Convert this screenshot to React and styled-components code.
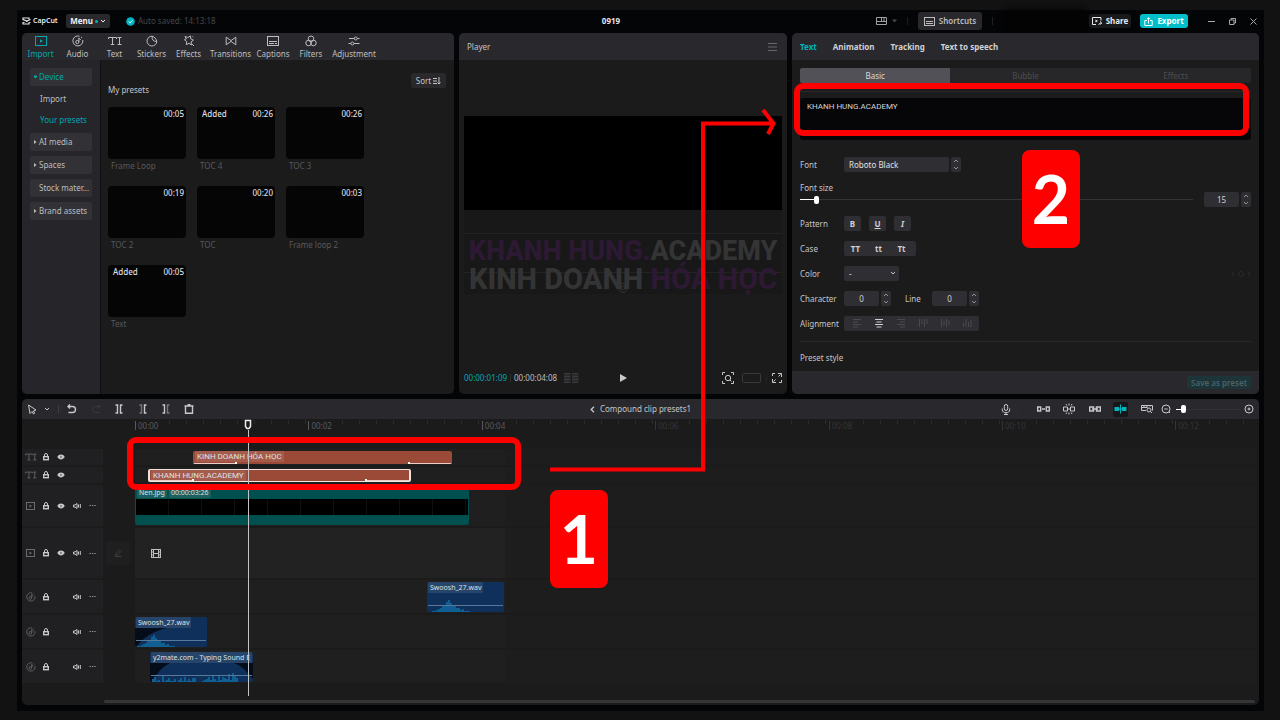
import { useState } from "react";
import styled, { createGlobalStyle, css } from "styled-components";

const GlobalStyle = createGlobalStyle`
  * {
    box-sizing: border-box;
  }
  body {
    margin: 0;
    background: #121212;
    color: #c4c4c6;
    font-family: "Noto Sans", "Open Sans", sans-serif;
    font-size: 8px;
    line-height: 12px;
  }
  button, input, select, textarea {
    margin: 0;
    padding: 0;
    border: 0;
    outline: 0;
    background: none;
    color: inherit;
    font: inherit;
  }
  button {
    cursor: pointer;
  }
  svg {
    display: block;
    flex: none;
  }
`;

const Page = styled.div`
  position: relative;
  min-height: 100vh;
  padding: 10px 16px 9px 17px;
  display: flex;
`;
const AppWindow = styled.div`
  flex: 1;
  min-width: 0;
  display: flex;
  flex-direction: column;
  padding: 0 5px 6px;
  background: #040507;
`;

/* title bar */
const TitleBar = styled.header`
  display: flex;
  height: 23px;
  align-items: center;
`;
const TitleMain = styled.div`
  flex: 1;
  display: grid;
  grid-template-columns: minmax(0, 1fr) auto minmax(0, 1fr);
  align-items: center;
  padding-bottom: 1px;
`;
const TitleSide = styled.div`
  display: flex;
  align-items: center;
  justify-content: ${(p) => (p.$end ? "flex-end" : "flex-start")};
  padding-right: ${(p) => (p.$end ? "12px" : "0")};
`;
const ProjectName = styled.h1`
  margin: 0;
  font-size: 8px;
  font-weight: 700;
  color: #e4e4e6;
`;
const Brand = styled.div`
  display: flex;
  align-items: center;
  gap: 2px;
  width: 44px;
  font-size: 7px;
  font-weight: 600;
  color: #e8e8ea;
`;
const MenuButton = styled.button`
  display: flex;
  align-items: center;
  justify-content: center;
  gap: 2px;
  width: 44px;
  height: 14px;
  border-radius: 2px;
  background: #29292c;
  font-weight: 700;
  color: #f0f0f2;
`;
const Dot = styled.i`
  width: 3px;
  height: 3px;
  border-radius: 50%;
  background: #00b5be;
`;
const SaveState = styled.div`
  display: flex;
  align-items: center;
  gap: 3px;
  margin-left: 16px;
  color: #47474a;
`;
const TitleButton = styled.button`
  display: flex;
  align-items: center;
  justify-content: center;
  gap: 4px;
  width: ${(p) => p.$width}px;
  height: ${(p) => (p.$tall ? 18 : 14)}px;
  border-radius: 3px;
  background: ${(p) => (p.$accent ? "#00bfcb" : p.$tall ? "#29292d" : "#19191c")};
  color: ${(p) => (p.$accent ? "#ffffff" : p.$tall ? "#bcbcbf" : "#e8e8ea")};
  font-weight: ${(p) => (p.$tall ? 600 : 700)};
`;
const LayoutButton = styled.button`
  display: flex;
  align-items: center;
  gap: 5px;
  color: #a0a0a3;
`;
const Separator = styled.i`
  width: 1px;
  height: ${(p) => p.$height || 8}px;
  margin: 0 ${(p) => p.$gap || 10}px;
  background: ${(p) => p.$color || "#1d1d20"};
`;
const Account = styled.div`
  width: 84px;
  height: 20px;
  margin: 0 2px 0 0;
  border-radius: 4px;
  background: #030304;
  box-shadow: 0 -2px 6px #060607;
`;
const WindowControls = styled.div`
  width: 59px;
  display: flex;
  justify-content: space-between;
  align-items: center;
  padding: 0 2px 0 8px;
  color: #a8a8aa;
  & button {
    display: flex;
  }
`;

/* panels */
const Panels = styled.main`
  flex: 361 1 361px;
  display: grid;
  grid-template-columns: minmax(0, 432fr) minmax(0, 328fr) minmax(0, 467fr);
  gap: 5px;
`;
const Panel = styled.section`
  display: flex;
  flex-direction: column;
  min-width: 0;
  overflow: hidden;
  border-radius: 5px;
  background: #1b1b1c;
`;
const PanelHeader = styled.div`
  display: flex;
  align-items: center;
  height: 27px;
  padding: 0 8px;
  background: #29292d;
`;

/* media panel */
const MediaTabs = styled.nav`
  display: grid;
  grid-template-columns: repeat(5, 37px) 47px repeat(2, 38px) 48px;
  height: 27px;
  background: #29292d;
`;
const MediaTab = styled.button`
  display: flex;
  flex-direction: column;
  align-items: center;
  gap: 1px;
  padding-top: 2px;
  white-space: nowrap;
  color: ${(p) => (p.$active ? "#00a7ae" : "#bdbdbf")};
`;
const MediaBody = styled.div`
  flex: 1;
  display: flex;
`;
const Sidebar = styled.nav`
  width: 79px;
  padding: 8px;
  display: flex;
  flex-direction: column;
  gap: 5px;
  background: #26262a;
  border-right: 1px solid #101011;
`;
const SideItem = styled.button`
  display: flex;
  align-items: center;
  gap: 2px;
  height: 18px;
  padding-left: ${(p) => (p.$arrow ? 4 : 9)}px;
  border-radius: 2px;
  background: #323236;
  white-space: nowrap;
  color: ${(p) => (p.$active ? "#00a7ae" : "#bdbdbf")};
`;
const SubItem = styled.button`
  height: 16px;
  padding-left: 10px;
  text-align: left;
  white-space: nowrap;
  color: ${(p) => (p.$active ? "#00a7ae" : "#bdbdbf")};
`;
const Library = styled.div`
  flex: 1;
  padding: 13px 8px 0 7px;
`;
const LibraryBar = styled.div`
  display: flex;
  justify-content: space-between;
  height: 34px;
`;
const LibraryTitle = styled.h2`
  margin: 11px 0 0;
  font-size: 8px;
  font-weight: 400;
`;
const SortButton = styled.button`
  display: flex;
  align-items: center;
  justify-content: center;
  gap: 2px;
  width: 35px;
  height: 15px;
  border-radius: 2px;
  background: #29292b;
`;
const PresetGrid = styled.div`
  display: grid;
  grid-template-columns: repeat(auto-fill, 78px);
  gap: 14px 11px;
`;
const Preset = styled.figure`
  margin: 0;
`;
const Thumb = styled.div`
  display: flex;
  justify-content: space-between;
  height: 52px;
  padding: 1px 2px 0 5px;
  border-radius: 4px;
  background: #050506;
  font-weight: 500;
  color: #dedee0;
`;
const PresetName = styled.figcaption`
  padding: 1px 3px 0;
  color: #58585a;
`;

/* player panel */
const HeaderTitle = styled.h2`
  flex: 1;
  margin: 0;
  font-size: 8px;
  font-weight: 400;
`;
const Stage = styled.div`
  flex: 1;
  padding: 56px 5px 0;
`;
const Video = styled.div`
  height: 94px;
  background: #000000;
`;
const Caption = styled.div`
  position: relative;
  height: 84px;
  padding-top: 27px;
  background: linear-gradient(#232324, #232324) 0 23px / 100% 1px no-repeat,
    linear-gradient(#232324, #232324) 0 62px / 100% 1px no-repeat, #181819;
  font-family: Roboto, sans-serif;
  font-weight: 800;
  line-height: 28px;
  text-align: center;
  white-space: nowrap;
  color: #343435;
`;
const CaptionLine = styled.p`
  margin: 0;
  font-size: ${(p) => p.$size}px;
`;
const Tint = styled.span`
  display: inline-block;
  color: #2d1933;
`;
const Pivot = styled.span`
  position: absolute;
  left: 50%;
  top: 72px;
  margin-left: -6px;
`;
const PlayerBar = styled.div`
  display: grid;
  grid-template-columns: 1fr auto 1fr;
  align-items: center;
  height: 32px;
  padding: 0 5px;
  color: #d0d0d2;
`;
const Group = styled.div`
  display: flex;
  align-items: center;
  gap: ${(p) => p.$gap || 0}px;
  justify-content: ${(p) => p.$justify || "flex-start"};
`;
const Timecode = styled.span`
  color: ${(p) => (p.$current ? "#00a7ae" : "#bdbdbf")};
`;
const IconButton = styled.button`
  display: flex;
  align-items: center;
  justify-content: center;
  width: ${(p) => p.$width || "auto"};
  color: ${(p) => (p.$dim ? "#3a3a3d" : "#c8c8ca")};
`;

/* inspector panel */
const InspectorTab = styled.button`
  margin-right: 16px;
  font-weight: 700;
  color: ${(p) => (p.$active ? "#00b5be" : "#d2d2d4")};
`;
const InspectorBody = styled.div`
  flex: 1;
  padding: 8px 8px 0;
`;
const Segments = styled.div`
  display: grid;
  grid-template-columns: repeat(3, 1fr);
  height: 15px;
  overflow: hidden;
  border-radius: 2px;
  background: #272729;
`;
const Segment = styled.button`
  background: ${(p) => (p.$active ? "#515157" : "transparent")};
  color: ${(p) => (p.$active ? "#d8d8da" : "#4c4c4f")};
`;
const Rule = styled.hr`
  height: 1px;
  margin: ${(p) => p.$margin};
  border: 0;
  background: #28282a;
`;
const TextContent = styled.textarea`
  display: block;
  width: 100%;
  height: 42px;
  padding: 3px 7px;
  resize: none;
  border-radius: 3px;
  background: #060608;
  font-family: Roboto, sans-serif;
  color: #d4d4d6;
`;
const Field = styled.div`
  display: flex;
  align-items: center;
  height: 25px;
`;
const FontField = styled(Field)`
  height: 15px;
  margin-top: 17px;
`;
const FieldName = styled.label`
  width: 44px;
  white-space: nowrap;
`;
const LineName = styled.label`
  width: 27px;
  margin-left: 14px;
`;
const StyleFields = styled.div`
  margin-top: 4px;
`;
const controlBox = css`
  height: 15px;
  border-radius: 2px;
  background: #2f2f33;
  color: #d0d0d2;
`;
const SelectBox = styled.select`
  ${controlBox}
  appearance: none;
  width: ${(p) => p.$width}px;
  padding: 0 5px;
  color: #e0e0e2;
`;
const SelectWrap = styled.div`
  position: relative;
  display: flex;
  & > svg {
    position: absolute;
    right: 3px;
    top: 4px;
    pointer-events: none;
  }
`;
const NumberBox = styled.input`
  ${controlBox}
  width: 35px;
  text-align: center;
`;
const Stepper = styled.div`
  ${controlBox}
  display: flex;
  flex-direction: column;
  width: 10px;
  margin-left: 2px;
  color: #909093;
  & button {
    flex: 1;
    display: flex;
    align-items: center;
    justify-content: center;
  }
`;
const SizeField = styled.div`
  display: grid;
  grid-template-columns: minmax(0, 1fr) auto;
  column-gap: 11px;
  align-items: center;
`;
const SizeLabel = styled.label`
  grid-column: 1 / -1;
  margin-top: 10px;
  height: 10px;
`;
const Slider = styled.input`
  appearance: none;
  width: ${(p) => p.$width || "100%"};
  height: 9px;
  background: linear-gradient(to right, #ffffff var(--fill), #343437 var(--fill)) center / 100% 1px no-repeat;
  &::-webkit-slider-thumb {
    appearance: none;
    width: 5px;
    height: 8px;
    border-radius: 2px;
    background: #ffffff;
  }
`;
const StyleButton = styled.button`
  ${controlBox}
  width: 17px;
  margin-right: 8px;
  font-weight: 700;
  font-style: ${(p) => (p.$italic ? "italic" : "normal")};
  text-decoration: ${(p) => (p.$underline ? "underline" : "none")};
`;
const ButtonStrip = styled.div`
  ${controlBox}
  display: flex;
  padding: ${(p) => (p.$icons ? "0 1px 0 2px" : "0 3px 0 0")};
  & button {
    display: flex;
    align-items: center;
    justify-content: center;
    width: ${(p) => (p.$icons ? 22 : 23)}px;
    font-weight: 700;
  }
`;
const AlignButton = styled.button`
  color: ${(p) => (p.$active ? "#d0d0d2" : "#4a4a4e")};
`;
const KeyframeNav = styled.div`
  margin-left: auto;
  color: #2c2c2e;
`;
const InspectorFooter = styled.footer`
  display: flex;
  align-items: center;
  justify-content: flex-end;
  height: 23px;
  padding: 0 8px;
  background: #29292d;
`;
const SaveButton = styled.button`
  width: 64px;
  height: 13px;
  border-radius: 2px;
  background: #1d3438;
  font-weight: 600;
  white-space: nowrap;
  color: #48636a;
`;

/* timeline */
const Timeline = styled.section`
  position: relative;
  flex: 306 1 306px;
  display: flex;
  flex-direction: column;
  margin-top: 5px;
  overflow: hidden;
  border-radius: 5px;
  background: #1b1b1c;
`;
const Toolbar = styled.div`
  display: grid;
  grid-template-columns: minmax(0, 1fr) auto minmax(0, 1fr);
  align-items: center;
  height: 20px;
  padding: 0 5px;
  background: #29292d;
`;
const Crumb = styled.button`
  display: flex;
  align-items: center;
  gap: 5px;
`;
const SnapButton = styled.button`
  display: flex;
  align-items: center;
  justify-content: center;
  width: 15px;
  height: 15px;
  margin: 0 5px;
  border-radius: 2px;
  background: #18181a;
  color: #00b5be;
`;
const Ruler = styled.div`
  display: flex;
  height: 30px;
  padding-left: 113px;
  overflow: hidden;
`;
const Mark = styled.div`
  flex: 0 0 calc(100% / 7 * 1.08);
  display: flex;
  align-items: flex-start;
  padding-top: 1px;
  color: ${(p) => (p.$dim ? "#353537" : "#5a5a5c")};
`;
const MarkLabel = styled.span`
  width: 34px;
  height: 9px;
  margin-top: 1px;
  padding-left: 2px;
  border-left: 1px solid;
  line-height: 10px;
`;
const Ticks = styled.i`
  flex: 1;
  height: 4px;
  background: repeating-linear-gradient(to right, #2c2c2e 0 1px, transparent 1px 17px);
`;
const Tracks = styled.div`
  flex: 1;
  display: flex;
  flex-direction: column;
  gap: 2px;
`;
const Track = styled.div`
  display: grid;
  grid-template-columns: 81px 32px minmax(0, 1fr);
  height: ${(p) => p.$height}px;
  padding-right: 3px;
`;
const TrackHead = styled.div`
  display: grid;
  grid-template-columns: repeat(5, 1fr);
  align-items: center;
  padding: 0 2px 0 1px;
  border-right: 1px solid #222224;
  background: #202023;
`;
const TrackKind = styled.span`
  display: flex;
  justify-content: center;
  color: #6a6a6d;
`;
const Gutter = styled.div`
  display: flex;
  align-items: center;
  padding-left: 3px;
`;
const CoverButton = styled.button`
  display: flex;
  align-items: center;
  justify-content: center;
  width: 24px;
  height: 24px;
  border-radius: 3px;
  background: #1f1f20;
  color: #3c3c3e;
`;
const Lane = styled.div`
  display: flex;
  align-items: center;
  background: linear-gradient(to right, ${(p) => (p.$main ? "#222223" : "#1f1f20")} 370px, #1d1d1e 370px);
`;
const clipColors = { text: "#9b4a38", video: "#00504f", audio: "#0f305a" };
const Clip = styled.div`
  position: relative;
  display: flex;
  flex-direction: column;
  flex: none;
  height: ${(p) => p.$height}px;
  overflow: hidden;
  border: 0 solid #f2e4e0;
  border-width: ${(p) => (p.$selected ? "1px 2px" : "0")};
  border-radius: 2px;
  background: ${(p) => clipColors[p.$kind]};
  color: #dde2e6;
`;
const ClipLabels = styled.div`
  display: flex;
  gap: 2px;
  flex: none;
  height: 11px;
  padding-left: ${(p) => p.$inset || 1}px;
`;
const ClipLabel = styled.span`
  padding: 0 2px;
  border-radius: 1px;
  background: rgba(255, 255, 255, 0.1);
  font-size: 7px;
  line-height: 11px;
  white-space: nowrap;
`;
const TitleLabel = styled(ClipLabel)`
  font-family: Roboto, sans-serif;
  font-size: 8px;
  line-height: 12px;
`;
const Fade = styled.i`
  position: absolute;
  bottom: 0;
  ${(p) => p.$side}: 0;
  width: 44px;
  height: 1px;
  background: #e9cfc8;
  &::after {
    content: "";
    position: absolute;
    bottom: 0;
    ${(p) => (p.$side === "left" ? "right" : "left")}: 0;
    width: 2px;
    height: 2px;
    background: #ffffff;
  }
`;
const Frames = styled.div`
  height: 16px;
  margin: 1px 1px 0;
  background: repeating-linear-gradient(to right, #000000 0 32px, #101010 32px 33px);
`;
const FilmIcon = styled.span`
  margin-left: 16px;
  color: #c0c0c2;
`;
const ScrollBar = styled.div`
  height: 3px;
  margin: 0 4px 2px 82px;
  border-radius: 2px;
  background: #363638;
`;
const Playhead = styled.div`
  position: absolute;
  left: 222px;
  top: 20px;
  bottom: 9px;
  display: flex;
  flex-direction: column;
  align-items: center;
  &::after {
    content: "";
    flex: 1;
    width: 1px;
    background: #c4c4c6;
  }
`;

/* call-outs */
const Highlight = styled.div`
  position: absolute;
  left: ${(p) => p.$x}px;
  top: ${(p) => p.$y}px;
  width: ${(p) => p.$width}px;
  height: 53px;
  border: 6px solid #ff0000;
  border-radius: 9px;
  pointer-events: none;
`;
const Arrow = styled.svg`
  position: absolute;
  left: 548px;
  top: 106px;
  pointer-events: none;
`;
const StepBadge = styled.div`
  position: absolute;
  left: ${(p) => p.$x}px;
  top: ${(p) => p.$y}px;
  display: flex;
  align-items: center;
  justify-content: center;
  width: 58px;
  height: 98px;
  border-radius: 8px;
  background: #ff0000;
  color: #ffffff;
  font-family: Lato, sans-serif;
  font-size: 66px;
  font-weight: 700;
  line-height: 98px;
`;

const Icon = ({ w = 12, h = 12, sw = 1, children }) => (
  <svg
    width={w}
    height={h}
    viewBox={`0 0 ${w} ${h}`}
    fill="none"
    stroke="currentColor"
    strokeWidth={sw}
    aria-hidden="true"
  >
    {children}
  </svg>
);

const AudioGlyph = ({ size = 12 }) => (
  <svg width={size} height={size} viewBox="0 0 12 12" fill="none" stroke="currentColor" aria-hidden="true">
    <path d="M7.5 1.2A5 5 0 1 0 10.8 5M10 2.8 9 2" />
    <circle cx="5.3" cy="7" r="1.6" />
    <path d="M6.9 7V2.8c.3 1.2 1 1.6 2 1.8" />
  </svg>
);
const TextGlyph = ({ w = 14, h = 12 }) => (
  <svg width={w} height={h} viewBox="0 0 14 12" fill="none" stroke="currentColor" aria-hidden="true">
    <path d="M.5 4V2.5h8V4M4.500 2.500v7M2.800 9.500h3.400M9.500 2.500h4M9.500 9.500h4M11.500 2.500v7" />
  </svg>
);
const ChevronDown = () => (
  <Icon w={6} h={6}>
    <path d="m1 2 2 2 2-2" />
  </Icon>
);
const ChevronUp = () => (
  <Icon w={6} h={4}>
    <path d="m1 3 2-2 2 2" />
  </Icon>
);
const SmallDown = () => (
  <Icon w={6} h={4}>
    <path d="m1 1 2 2 2-2" />
  </Icon>
);

const tabIcons = {
  Import: (
    <Icon>
      <rect x=".5" y="1.5" width="11" height="9" />
      <path d="m5 4.2 3 1.8-3 1.8z" fill="currentColor" stroke="none" />
    </Icon>
  ),
  Audio: <AudioGlyph />,
  Text: <TextGlyph />,
  Stickers: (
    <Icon>
      <path d="M6 1.2A4.9 4.9 0 1 0 10.8 6.6C10.4 3.8 8.3 1.6 6 1.2zM6.2 1.4c-.5 3 1 5 4.4 5.2" />
    </Icon>
  ),
  Effects: (
    <Icon>
      <path d="m2 1.5 2.8 1L7.5.9l.2 2.9 2.8 1.4-2.4 1.6.4 3.1-2.5-1.6-2.7 1.3.4-3L1.5 4.7l1.8-.8zM9 9l2 2M9.5 1.5l.8.5" />
    </Icon>
  ),
  Transitions: (
    <Icon>
      <path d="M1.2 2.2v7.6L6 6.4l4.8 3.4V2.2L6 5.6z" />
    </Icon>
  ),
  Captions: (
    <Icon>
      <rect x=".5" y="1.5" width="11" height="9" />
      <path d="M2 6.5h8M2 8.5h5M8 8.5h2" />
    </Icon>
  ),
  Filters: (
    <Icon>
      <circle cx="6" cy="3.8" r="2.8" />
      <circle cx="3.6" cy="8" r="2.8" />
      <circle cx="8.4" cy="8" r="2.8" />
    </Icon>
  ),
  Adjustment: (
    <Icon>
      <path d="M1 3.5h5.2M9.2 3.5H11.5M.5 8.5h2.4M6 8.5h5.5" />
      <circle cx="7.7" cy="3.5" r="1.5" />
      <circle cx="4.4" cy="8.5" r="1.5" />
    </Icon>
  ),
};

const presets = [
  { name: "Frame Loop", time: "00:05" },
  { name: "TOC 4", time: "00:26", added: true },
  { name: "TOC 3", time: "00:26" },
  { name: "TOC 2", time: "00:19" },
  { name: "TOC", time: "00:20" },
  { name: "Frame loop 2", time: "00:03" },
  { name: "Text", time: "00:05", added: true },
];

const MediaPanel = () => (
  <Panel>
    <MediaTabs>
      {Object.keys(tabIcons).map((name) => (
        <MediaTab key={name} $active={name === "Import"}>
          {tabIcons[name]}
          {name}
        </MediaTab>
      ))}
    </MediaTabs>
    <MediaBody>
      <Sidebar>
        <SideItem $arrow $active>
          <Icon w={3} h={4}>
            <path d="M0 .5h3v1.500L1.500 3.500 0 2z" fill="currentColor" stroke="none" />
          </Icon>
          Device
        </SideItem>
        <SubItem>Import</SubItem>
        <SubItem $active>Your presets</SubItem>
        {["AI media", "Spaces", "Stock mater...", "Brand assets"].map((name) => {
          const arrow = name !== "Stock mater...";
          return (
            <SideItem key={name} $arrow={arrow}>
              {arrow && (
                <Icon w={3} h={4}>
                  <path d="M0 0v4l2.5-2z" fill="currentColor" stroke="none" />
                </Icon>
              )}
              {name}
            </SideItem>
          );
        })}
      </Sidebar>
      <Library>
        <LibraryBar>
          <LibraryTitle>My presets</LibraryTitle>
          <SortButton>
            Sort
            <Icon w={8} h={8}>
              <path d="M0 1.5h4M0 4h4M0 6.5h4M6 0v7M4.5 5.5 6 7l1.5-1.5" />
            </Icon>
          </SortButton>
        </LibraryBar>
        <PresetGrid>
          {presets.map((preset) => (
            <Preset key={preset.name}>
              <Thumb>
                <span>{preset.added ? "Added" : ""}</span>
                <span>{preset.time}</span>
              </Thumb>
              <PresetName>{preset.name}</PresetName>
            </Preset>
          ))}
        </PresetGrid>
      </Library>
    </MediaBody>
  </Panel>
);

const PlayerPanel = () => (
  <Panel>
    <PanelHeader>
      <HeaderTitle>Player</HeaderTitle>
      <IconButton $dim aria-label="Player menu">
        <Icon w={13} h={10}>
          <path d="M2 1.5h9M2 5h9M2 8.5h9" stroke="#68686b" />
        </Icon>
      </IconButton>
    </PanelHeader>
    <Stage>
      <Video />
      <Caption>
        <CaptionLine $size={27}>
          <Tint>KHANH HUNG.</Tint>ACADEMY
        </CaptionLine>
        <CaptionLine $size={29}>
          KINH DOANH <Tint>HÓA HỌC</Tint>
        </CaptionLine>
        <Pivot>
          <Icon>
            <circle cx="6" cy="6" r="4.5" />
            <circle cx="6" cy="6" r="2" />
          </Icon>
        </Pivot>
      </Caption>
    </Stage>
    <PlayerBar>
      <Group>
        <Timecode $current>00:00:01:09</Timecode>
        <Separator $gap={3} $color="#2c2c2e" />
        <Timecode>00:00:04:08</Timecode>
        <IconButton $dim $width="29px" aria-label="Grid">
          <Icon w={15} h={10}>
            <path d="M0 .5h6.500M0 3.500h6.500M0 6.500h6.500M0 9.500h6.500M8 .5h6.500M8 3.500h6.500M8 6.500h6.500M8 9.500h6.500M0 2h6.500M8 2h6.500M0 5h6.500M8 5h6.500M0 8h6.500M8 8h6.500" />
          </Icon>
        </IconButton>
      </Group>
      <IconButton aria-label="Play">
        <Icon w={7} h={8}>
          <path d="M0 0v8l7-4z" fill="currentColor" stroke="none" />
        </Icon>
      </IconButton>
      <Group $gap={8} $justify="flex-end">
        <IconButton aria-label="Fit">
          <Icon>
            <path d="M.5 3V.5H3M9 .5h2.500V3M11.500 9v2.500H9M3 11.500H.5V9M8 8l1.500 1.500" />
            <circle cx="6" cy="6" r="2.700" />
          </Icon>
        </IconButton>
        <Group $gap={4}>
          <IconButton $dim aria-label="Ratio">
            <Icon w={19} h={10}>
              <rect x=".5" y=".5" width="18" height="9" rx="1" />
            </Icon>
          </IconButton>
          <Separator $gap={1} $height={5} $color="#242426" />
          <IconButton aria-label="Full screen">
            <Icon w={10} h={10}>
              <path d="M.5 3V.5H3M6 .5h3.500V4M9.500 7v2.500H7M4 9.500H.5V6M6.500 3.500l2-2M3.500 6.500l-2 2" />
            </Icon>
          </IconButton>
        </Group>
      </Group>
    </PlayerBar>
  </Panel>
);

const StepperButtons = ({ name, onStep = () => {} }) => (
  <Stepper>
    <button aria-label={`${name} up`} onClick={() => onStep(1)}>
      <ChevronUp />
    </button>
    <button aria-label={`${name} down`} onClick={() => onStep(-1)}>
      <SmallDown />
    </button>
  </Stepper>
);

const alignIcons = [
  "M0 .5h8M0 3h5M0 5.500h8M0 8h5",
  "M0 .5h8M1.500 3h5M0 5.500h8M1.500 8h5",
  "M0 .5h8M3 3h5M0 5.500h8M3 8h5",
  "M.5 0v8M3 0v5M5.500 0v8M8 0v5",
  "M.5 0v8M3 1.500v5M5.500 0v8M8 1.500v5",
  "M.5 4v4M3 0v8M5.500 3v5M8 1v7",
];

const InspectorPanel = () => {
  const [text, setText] = useState("KHANH HUNG.ACADEMY");
  const [size, setSize] = useState(15);
  const [spacing, setSpacing] = useState(0);
  const [line, setLine] = useState(0);

  return (
    <Panel>
      <PanelHeader>
        <InspectorTab $active>Text</InspectorTab>
        <InspectorTab>Animation</InspectorTab>
        <InspectorTab>Tracking</InspectorTab>
        <InspectorTab>Text to speech</InspectorTab>
      </PanelHeader>
      <InspectorBody>
        <Segments>
          <Segment $active>Basic</Segment>
          <Segment>Bubble</Segment>
          <Segment>Effects</Segment>
        </Segments>
        <Rule $margin="8px 0 6px" />
        <TextContent aria-label="Text content" value={text} onChange={(e) => setText(e.target.value)} />
        <FontField>
          <FieldName htmlFor="font">Font</FieldName>
          <SelectBox id="font" $width={105}>
            <option>Roboto Black</option>
          </SelectBox>
          <StepperButtons name="Font" />
        </FontField>
        <SizeField>
          <SizeLabel htmlFor="size">Font size</SizeLabel>
          <Slider
            id="size"
            type="range"
            min="1"
            max="400"
            value={size}
            onChange={(e) => setSize(Number(e.target.value))}
            style={{ "--fill": `${(size / 400) * 100}%` }}
          />
          <Group>
            <NumberBox
              aria-label="Font size value"
              value={size}
              onChange={(e) => setSize(Number(e.target.value) || 0)}
            />
            <StepperButtons name="Font size" onStep={(step) => setSize(size + step)} />
          </Group>
        </SizeField>
        <StyleFields>
          <Field>
            <FieldName as="span">Pattern</FieldName>
            <StyleButton>B</StyleButton>
            <StyleButton $underline>U</StyleButton>
            <StyleButton $italic>I</StyleButton>
          </Field>
          <Field>
            <FieldName as="span">Case</FieldName>
            <ButtonStrip>
              <button>TT</button>
              <button>tt</button>
              <button>Tt</button>
            </ButtonStrip>
          </Field>
          <Field>
            <FieldName htmlFor="color">Color</FieldName>
            <SelectWrap>
              <SelectBox id="color" $width={55}>
                <option>-</option>
              </SelectBox>
              <ChevronDown />
            </SelectWrap>
            <KeyframeNav>
              <Icon w={20} h={8}>
                <path d="M3 2 1 4l2 2M17 2l2 2-2 2M10 .8 13.200 4 10 7.200 6.800 4z" />
              </Icon>
            </KeyframeNav>
          </Field>
          <Field>
            <FieldName htmlFor="character">Character</FieldName>
            <NumberBox id="character" value={spacing} onChange={(e) => setSpacing(Number(e.target.value) || 0)} />
            <StepperButtons name="Character" onStep={(step) => setSpacing(spacing + step)} />
            <LineName htmlFor="line">Line</LineName>
            <NumberBox id="line" value={line} onChange={(e) => setLine(Number(e.target.value) || 0)} />
            <StepperButtons name="Line" onStep={(step) => setLine(line + step)} />
          </Field>
          <Field>
            <FieldName as="span">Alignment</FieldName>
            <ButtonStrip $icons>
              {alignIcons.map((d, i) => (
                <AlignButton key={d} $active={i === 1} aria-label={`Align ${i + 1}`}>
                  <Icon w={9} h={9}>
                    <path d={d} />
                  </Icon>
                </AlignButton>
              ))}
            </ButtonStrip>
          </Field>
        </StyleFields>
        <Rule $margin="5px 0 10px" />
        Preset style
      </InspectorBody>
      <InspectorFooter>
        <SaveButton disabled>Save as preset</SaveButton>
      </InspectorFooter>
    </Panel>
  );
};

// clip positions and widths are in pixels from the start of the lane
const tracks = [
  { type: "text", height: 16, clips: [{ kind: "text", title: "KINH DOANH HÓA HỌC", at: 58, width: 259 }] },
  {
    type: "text",
    height: 16,
    clips: [{ kind: "text", title: "KHANH HUNG.ACADEMY", at: 13, width: 263, selected: true }],
  },
  { type: "video", height: 41, clips: [{ kind: "video", title: "Nen.jpg", at: 0, width: 334 }] },
  { type: "main", height: 50, clips: [] },
  { type: "audio", height: 33, clips: [{ kind: "audio", title: "Swoosh_27.wav", at: 292, width: 77, wave: "peak" }] },
  { type: "audio", height: 33, clips: [{ kind: "audio", title: "Swoosh_27.wav", at: 0, width: 72, wave: "fade" }] },
  {
    type: "audio",
    height: 33,
    clips: [{ kind: "audio", title: "y2mate.com - Typing Sound E", at: 15, width: 103, wave: "typing" }],
  },
];

const peakBars = [1, 1, 2, 3, 4, 6, 7, 10, 12, 9, 6, 6, 4, 4, 2, 3, 1, 1, 1];
const typingBars = [3, 5, 1, 2, 0, 6, 1, 2, 4, 1, 1, 3, 0, 2, 4, 1, 5, 1, 3, 1, 4, 4, 0, 0, 0, 1, 2, 3, 5, 2, 7, 3, 1, 6, 2, 5, 4, 3, 8, 2, 9, 6, 4];

const Bars = ({ bars, start }) => (
  <path
    d={bars.map((v, i) => `M${start + i * 2} 19v${-v}h2v${v}z`).join("")}
    fill="#0f5f92"
    stroke="none"
  />
);

const Wave = ({ type, width }) => (
  <Icon w={width} h={19}>
    {type === "fade" && <path d="M0 0h32C18 3 8 10 1 19H0z" fill="#050d1a" stroke="none" />}
    {type === "typing" && (
      <path d={`M0 0h20C12 4 6 11 2 19H0zM${width} 0H84C92 3 97 9 101 14l2 2z`} fill="#050d1a" stroke="none" />
    )}
    <Bars bars={type === "typing" ? typingBars : peakBars} start={type === "peak" ? 5 : 2} />
    <path d={`M1 12.500H${width - 1}`} stroke="#58789c" />
  </Icon>
);

const headIcons = {
  text: <TextGlyph w={12} h={10} />,
  video: (
    <Icon w={9} h={8}>
      <rect x=".5" y=".5" width="8" height="7" />
      <path d="m3.500 2.500 2.500 1.500-2.500 1.500z" fill="currentColor" stroke="none" />
    </Icon>
  ),
  audio: <AudioGlyph size={10} />,
};

const TrackControls = ({ type }) => (
  <TrackHead>
    <TrackKind>{headIcons[type === "main" ? "video" : type]}</TrackKind>
    <IconButton aria-label="Lock track">
      <Icon w={6} h={8}>
        <path d="M1.500 3.500V2a1.500 1.500 0 0 1 3 0v1.500" />
        <rect x=".7" y="3.700" width="4.600" height="3" strokeWidth="1.400" />
      </Icon>
    </IconButton>
    {type === "audio" ? (
      <span />
    ) : (
      <IconButton aria-label="Hide track">
        <Icon w={8} h={6}>
          <path d="M.3 3C2-.2 6-.2 7.700 3 6 6.200 2 6.200.3 3z" fill="currentColor" stroke="none" />
          <circle cx="4" cy="3" r=".7" fill="#202023" stroke="none" />
        </Icon>
      </IconButton>
    )}
    {type === "text" ? (
      <span />
    ) : (
      <IconButton aria-label="Mute track">
        <Icon w={8} h={8}>
          <path d="M.5 3v2h1.500l2 1.500v-5L2 3zM5.500 2.500v3M7.300 2v4" />
        </Icon>
      </IconButton>
    )}
    {type === "text" ? (
      <span />
    ) : (
      <IconButton aria-label="More">
        <Icon w={7} h={3}>
          <path d="M.5 1.500h1.300M2.900 1.500h1.300M5.300 1.500h1.300" stroke="#9a9a9c" />
        </Icon>
      </IconButton>
    )}
  </TrackHead>
);

const ClipView = ({ clip }) => {
  const place = { marginLeft: clip.at, width: clip.width };
  if (clip.kind === "text") {
    return (
      <Clip $kind="text" $height={13} $selected={clip.selected} style={place}>
        <ClipLabels $inset={clip.selected ? 1 : 2}>
          <TitleLabel>{clip.title}</TitleLabel>
        </ClipLabels>
        <Fade $side="left" />
        <Fade $side="right" />
      </Clip>
    );
  }
  if (clip.kind === "video") {
    return (
      <Clip $kind="video" $height={38} style={place}>
        <ClipLabels $inset={2}>
          <ClipLabel>{clip.title}</ClipLabel>
          <ClipLabel>00:00:03:26</ClipLabel>
        </ClipLabels>
        <Frames />
      </Clip>
    );
  }
  return (
    <Clip $kind="audio" $height={30} style={place}>
      <ClipLabels>
        <ClipLabel>{clip.title}</ClipLabel>
      </ClipLabels>
      <Wave type={clip.wave} width={clip.width} />
    </Clip>
  );
};

const TimelinePanel = () => {
  const [zoom, setZoom] = useState(9);

  return (
    <Timeline>
      <Toolbar>
        <Group>
          <IconButton $width="10px" aria-label="Select">
            <Icon w={10} h={11}>
              <path d="m1.500 1 1.500 8.500 2-2 1.500 2.500 1.200-.8L6.400 7 9 6z" />
            </Icon>
          </IconButton>
          <IconButton $width="20px" aria-label="Select mode">
            <ChevronDown />
          </IconButton>
          <Separator $gap={1} $color="#404044" />
          <IconButton $width="24px" aria-label="Undo">
            <Icon w={10} h={10} sw={1.4}>
              <path d="M3 .5 1 2.500l2 2M1 2.500h4.500a2.800 2.800 0 0 1 0 6H1.500" />
            </Icon>
          </IconButton>
          <IconButton $dim $width="23px" aria-label="Redo">
            <Icon w={10} h={10}>
              <path d="m7 .5 2 2-2 2M9 2.500H4.500a2.800 2.800 0 0 0 0 6h4" />
            </Icon>
          </IconButton>
          <IconButton $width="24px" aria-label="Split">
            <Icon w={8} h={10} sw={1.4}>
              <path d="M.5 1h2v8h-2M7.500 1h-2v8h2" />
            </Icon>
          </IconButton>
          <IconButton $width="23px" aria-label="Delete left">
            <Icon w={8} h={10} sw={1.4}>
              <path d="M.5 1h2v8h-2" stroke="#77777a" />
              <path d="M7.500 1h-2v8h2" />
            </Icon>
          </IconButton>
          <IconButton $width="23px" aria-label="Delete right">
            <Icon w={8} h={10} sw={1.4}>
              <path d="M.5 1h2v8h-2" />
              <path d="M7.500 1h-2v8h2" stroke="#77777a" />
            </Icon>
          </IconButton>
          <IconButton $width="24px" aria-label="Delete">
            <Icon w={10} h={10} sw={1.4}>
              <path d="M.5 2h9M3.500.8h3M1.500 2v7.200h7V2" />
            </Icon>
          </IconButton>
        </Group>
        <Crumb>
          <Icon w={5} h={7} sw={1.4}>
            <path d="M4 .8 1.200 3.500 4 6.200" />
          </Icon>
          Compound clip presets1
        </Crumb>
        <Group $justify="flex-end">
          <IconButton $width="14px" aria-label="Record">
            <Icon w={10} h={11}>
              <rect x="3.300" y=".5" width="3.400" height="6" rx="1.700" />
              <path d="M1.300 4.500v1.200c0 2 1.500 3 3.700 3s3.700-1 3.700-3V4.500M5 8.700V11M3 10.500h4" />
            </Icon>
          </IconButton>
          <Separator $gap={8} $color="#242427" />
          <IconButton $width="26px" aria-label="Main track magnet">
            <Icon w={13} h={6} sw={1.4}>
              <path d="M.7 1h3v4h-3zM9.300 1h3v4h-3zM5 3h3" />
            </Icon>
          </IconButton>
          <IconButton $width="26px" aria-label="Auto snapping">
            <Icon w={12} h={12}>
              <path d="M.5 4h4v4h-4M7.500 4h4v4h-4zM.5 4v4M4 6h4M6 .5v2M6 9.500v2M3 1l.8 1.500M9 1l-.8 1.500M3 11l.8-1.500M9 11l-.8-1.500" />
            </Icon>
          </IconButton>
          <IconButton $width="26px" aria-label="Linkage">
            <Icon w={12} h={6} sw={1.4}>
              <path d="M.7 1h3.800v4H.7zM7.500 1h3.800v4H7.500zM3 3h6" />
            </Icon>
          </IconButton>
          <SnapButton aria-label="Preview axis">
            <Icon w={13} h={10}>
              <path d="M.5 3h4.500v4H.5zM8 3h4.500v4H8z" fill="currentColor" stroke="none" />
              <path d="M6.500.5v9M5 5h3" />
            </Icon>
          </SnapButton>
          <IconButton $width="28px" aria-label="Cover frames">
            <Icon w={12} h={10}>
              <path d="M5 6.500H.5v-5h11v5M.5 3.500h6M3 1.500v2M6 1.500v2M9 1.500v1" />
              <circle cx="8" cy="6" r="2" />
              <path d="m9.500 7.500 1.500 1.500" />
            </Icon>
          </IconButton>
          <Group $gap={5}>
            <IconButton aria-label="Zoom out">
              <Icon w={10} h={10}>
                <circle cx="5" cy="5" r="4" />
                <path d="M3.300 5h3.400M7.800 7.800 9 9" />
              </Icon>
            </IconButton>
            <Slider
              $width="63px"
              type="range"
              aria-label="Timeline zoom"
              min="0"
              max="100"
              value={zoom}
              onChange={(e) => setZoom(Number(e.target.value))}
              style={{ "--fill": `${zoom}%` }}
            />
            <IconButton aria-label="Zoom in">
              <Icon w={10} h={10}>
                <circle cx="5" cy="5" r="4" />
                <path d="M3.500 5h3M5 3.500v3" />
              </Icon>
            </IconButton>
          </Group>
        </Group>
      </Toolbar>
      <Ruler>
        {["00:00", "00:02", "00:04", "00:06", "00:08", "00:10", "00:12"].map((mark, i) => (
          <Mark key={mark} $dim={i > 2}>
            <MarkLabel>{mark}</MarkLabel>
            <Ticks />
          </Mark>
        ))}
      </Ruler>
      <Tracks>
        {tracks.map((track, i) => (
          <Track key={i} $height={track.height}>
            <TrackControls type={track.type} />
            <Gutter>
              {track.type === "main" && (
                <CoverButton aria-label="Edit cover">
                  <Icon w={8} h={8}>
                    <path d="m1.500 5 4-4 1.500 1.500-4 4H1.500zM1 7.500h6.500" />
                  </Icon>
                </CoverButton>
              )}
            </Gutter>
            <Lane $main={track.type === "main"}>
              {track.type === "main" && (
                <FilmIcon>
                  <Icon w={10} h={9}>
                    <rect x=".5" y=".5" width="9" height="8" />
                    <path d="M2.500.5v8M7.500.5v8M2.500 4.500h5M.5 3h2M.5 6h2M7.500 3h2M7.500 6h2" />
                  </Icon>
                </FilmIcon>
              )}
              {track.clips.map((clip) => (
                <ClipView key={clip.title} clip={clip} />
              ))}
            </Lane>
          </Track>
        ))}
      </Tracks>
      <ScrollBar />
      <Playhead>
        <Icon w={8} h={11}>
          <path d="M1.500 1.500h5v6L5 9.500H3L1.500 7.500z" stroke="#f0f0f2" strokeWidth="1.500" fill="#1b1b1c" />
        </Icon>
      </Playhead>
    </Timeline>
  );
};

const AppTitle = () => (
  <TitleBar>
    <TitleMain>
      <TitleSide>
        <Brand>
          <Icon w={9} h={8}>
            <path d="M7 2.200V1H1v1.500l7.500 3M7 5.800V7H1V5.500l7.500-3" strokeWidth="1.200" />
          </Icon>
          CapCut
        </Brand>
        <MenuButton>
          Menu
          <Dot />
          <ChevronDown />
        </MenuButton>
        <SaveState>
          <Icon w={9} h={9}>
            <circle cx="4.500" cy="4.500" r="4.300" fill="#00b5c4" stroke="none" />
            <path d="m2.700 4.500 1.400 1.400L6.500 3.500" stroke="#ffffff" />
          </Icon>
          Auto saved: 14:13:18
        </SaveState>
      </TitleSide>
      <ProjectName>0919</ProjectName>
      <TitleSide $end>
        <LayoutButton aria-label="Layout">
          <Icon w={11} h={8}>
            <path d="M.5.5h10v7H.5zM.5 4.500h10M5.500.5v4M8 .5v4" />
          </Icon>
          <Icon w={5} h={4}>
            <path d="M0 .5h5L2.500 3.500z" fill="#4a4a4d" stroke="none" />
          </Icon>
        </LayoutButton>
        <Separator />
        <TitleButton $width={64} $tall>
          <Icon w={11} h={9}>
            <rect x=".5" y=".5" width="10" height="8" />
            <path d="M2 4.500h7M2 6.500h7" />
          </Icon>
          Shortcuts
        </TitleButton>
        <Separator />
        <Account />
        <TitleButton $width={42}>
          <Icon w={10} h={9}>
            <path d="M9 3.500v-3H.5v7H4M6.500 7.500C7.500 6.500 8.500 6 9.500 6M8 4.500 9.700 6 8 7.700" />
            <path d="m3.500 2.500 2.500 1.500-2.500 1.500z" fill="currentColor" stroke="none" />
          </Icon>
          Share
        </TitleButton>
        <Separator $gap={4} $color="transparent" />
        <TitleButton $width={48} $accent>
          <Icon w={9} h={9}>
            <path d="M3 3.500H.8v5h7.400v-5H6M4.500 6.500V.8M2.800 2.300 4.500.7l1.700 1.600" />
          </Icon>
          Export
        </TitleButton>
      </TitleSide>
    </TitleMain>
    <WindowControls>
      <button aria-label="Minimize">
        <Icon w={7} h={7}>
          <path d="M0 3.500h7" />
        </Icon>
      </button>
      <button aria-label="Restore">
        <Icon w={7} h={7}>
          <path d="M.5 2h4.500v4.500H.5zM2 2V.5h4.500V5H5" />
        </Icon>
      </button>
      <button aria-label="Close">
        <Icon w={7} h={7}>
          <path d="m.5.5 6 6M6.500.5l-6 6" />
        </Icon>
      </button>
    </WindowControls>
  </TitleBar>
);

const App = () => (
  <>
    <GlobalStyle />
    <Page>
      <AppWindow>
        <AppTitle />
        <Panels>
          <MediaPanel />
          <PlayerPanel />
          <InspectorPanel />
        </Panels>
        <TimelinePanel />
      </AppWindow>
      <Highlight $x={127} $y={437} $width={394} />
      <Highlight $x={794} $y={83} $width={455} />
      <Arrow width="230" height="368" fill="none" stroke="#ff0000" strokeWidth="4">
        <path d="M2 363.500h153V17.500h70M215 4l10.500 13.500L220 28" />
      </Arrow>
      <StepBadge $x={550} $y={490}>1</StepBadge>
      <StepBadge $x={1022} $y={150}>2</StepBadge>
    </Page>
  </>
);

export default App;
